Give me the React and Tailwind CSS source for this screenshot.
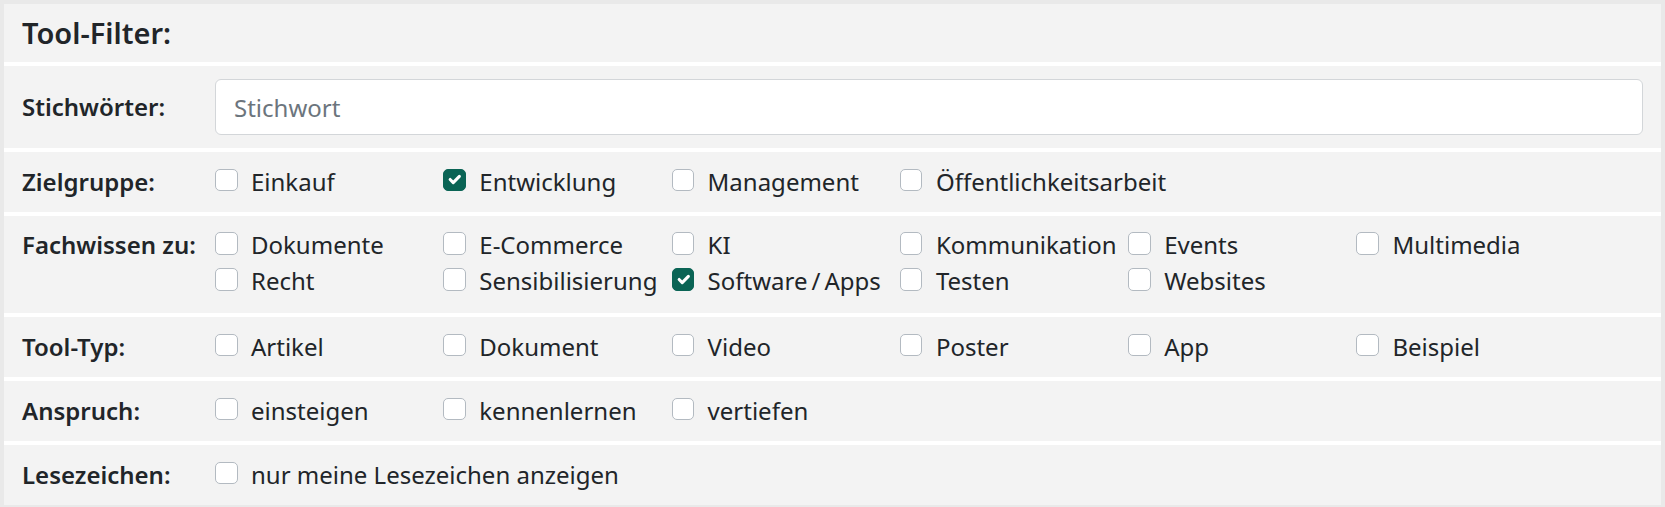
import React from 'react';

const groups = [
  {
    label: 'Zielgruppe:',
    options: [
      { name: 'Einkauf' },
      { name: 'Entwicklung', checked: true },
      { name: 'Management' },
      { name: 'Öffentlichkeitsarbeit' },
    ],
  },
  {
    label: 'Fachwissen zu:',
    options: [
      { name: 'Dokumente' },
      { name: 'E-Commerce' },
      { name: 'KI' },
      { name: 'Kommunikation' },
      { name: 'Events' },
      { name: 'Multimedia' },
      { name: 'Recht' },
      { name: 'Sensibilisierung' },
      { name: 'Software\u2009/\u2009Apps', checked: true },
      { name: 'Testen' },
      { name: 'Websites' },
    ],
    pad: 'pt-[11px] pb-[14px]',
  },
  {
    label: 'Tool-Typ:',
    options: [
      { name: 'Artikel' },
      { name: 'Dokument' },
      { name: 'Video' },
      { name: 'Poster' },
      { name: 'App' },
      { name: 'Beispiel' },
    ],
  },
  {
    label: 'Anspruch:',
    options: [{ name: 'einsteigen' }, { name: 'kennenlernen' }, { name: 'vertiefen' }],
  },
  {
    label: 'Lesezeichen:',
    options: [{ name: 'nur meine Lesezeichen anzeigen' }],
    wide: true,
  },
];

const Checkbox = ({ checked }) => (
  <span
    className={
      checked
        ? 'mt-[5px] flex h-[22.5px] w-[22.5px] shrink-0 items-center justify-center rounded-[5px] border border-[#0a6455] bg-[#0a6455]'
        : 'mt-[5px] h-[22.5px] w-[22.5px] shrink-0 rounded-[5px] border border-[#b3bac1] bg-white'
    }
  >
    {checked && (
      <svg viewBox="0 0 20 20" className="h-[21px] w-[21px]" fill="none">
        <path
          d="m6 10 3 3 6-6"
          stroke="#fff"
          strokeWidth="3"
          strokeLinecap="round"
          strokeLinejoin="round"
        />
      </svg>
    )}
  </span>
);

const Option = ({ name, checked }) => (
  <label className="flex h-[36px] items-start gap-[13.5px]">
    <Checkbox checked={checked} />
    <span className="whitespace-nowrap leading-[36px]">{name}</span>
  </label>
);

export default function App() {
  return (
    <div
      className="w-[1665px] border-4 border-[#e9e9e9] bg-white text-[24px] text-[#212529]"
      style={{ fontFamily: '"Noto Sans", "Open Sans", sans-serif' }}
    >
      <div className="flex flex-col gap-[4px]">
        <div className="bg-[#f3f3f3] px-[18px] py-[11px]">
          <h5 className="text-[29px] font-semibold leading-[36px]">Tool-Filter:</h5>
        </div>

        <div className="flex items-center bg-[#f3f3f3] px-[18px] py-[13px]">
          <div className="w-[193px] shrink-0 font-semibold leading-[36px]">Stichwörter:</div>
          <input
            type="text"
            placeholder="Stichwort"
            className="h-[56px] flex-1 rounded-[6px] border border-[#d3d6d9] bg-white px-[18px] leading-[36px] outline-none placeholder:text-[#6c757d]"
          />
        </div>

        {groups.map((g) => (
          <div key={g.label} className={`flex bg-[#f3f3f3] px-[18px] ${g.pad || 'pt-[11.5px] pb-[12.5px]'}`}>
            <div className="w-[193px] shrink-0 font-semibold leading-[36px]">{g.label}</div>
            <div className="grid grid-cols-[repeat(6,228.3px)]">
              {g.options.map((o) => (
                <div key={o.name} className={g.wide ? 'col-span-3' : ''}>
                  <Option name={o.name} checked={o.checked} />
                </div>
              ))}
            </div>
          </div>
        ))}
      </div>
    </div>
  );
}
